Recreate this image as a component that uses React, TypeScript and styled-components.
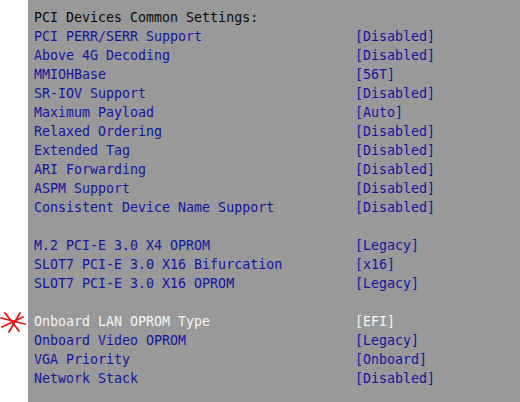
import React from "react";
import styled, { createGlobalStyle } from "styled-components";

const Global = createGlobalStyle`
  html, body { margin: 0; padding: 0; background: #ffffff; }
  #root { width: 520px; height: 402px; }
`;

const Screen = styled.div`
  display: flex;
  width: 520px;
  height: 402px;
  overflow: hidden;
`;

const Gutter = styled.div`
  position: relative;
  width: 28px;
  flex: none;
  background: #ffffff;
`;

const Panel = styled.div`
  flex: 1;
  background: #999999;
  padding: 8px 0 0 6px;
  font-family: "DejaVu Sans Mono", "Liberation Mono", monospace;
  font-size: 13.3px;
  line-height: 19px;
  white-space: pre;
`;

const Row = styled.div<{ $tone: "head" | "item" | "active" }>`
  display: grid;
  grid-template-columns: 321px 1fr;
  height: 19px;
  color: ${(p) => (p.$tone === "head" ? "#0a0a0a" : p.$tone === "active" ? "#f4f4f4" : "#1515a0")};
`;

const Spacer = styled.div`
  height: 19px;
`;

const Mark = styled.svg`
  position: absolute;
  left: 0;
  top: 311px;
`;

type Item = { label: string; value?: string; tone?: "head" | "item" | "active" } | null;

const items: Item[] = [
  { label: "PCI Devices Common Settings:", tone: "head" },
  { label: "PCI PERR/SERR Support", value: "[Disabled]" },
  { label: "Above 4G Decoding", value: "[Disabled]" },
  { label: "MMIOHBase", value: "[56T]" },
  { label: "SR-IOV Support", value: "[Disabled]" },
  { label: "Maximum Payload", value: "[Auto]" },
  { label: "Relaxed Ordering", value: "[Disabled]" },
  { label: "Extended Tag", value: "[Disabled]" },
  { label: "ARI Forwarding", value: "[Disabled]" },
  { label: "ASPM Support", value: "[Disabled]" },
  { label: "Consistent Device Name Support", value: "[Disabled]" },
  null,
  { label: "M.2 PCI-E 3.0 X4 OPROM", value: "[Legacy]" },
  { label: "SLOT7 PCI-E 3.0 X16 Bifurcation", value: "[x16]" },
  { label: "SLOT7 PCI-E 3.0 X16 OPROM", value: "[Legacy]" },
  null,
  { label: "Onboard LAN OPROM Type", value: "[EFI]", tone: "active" },
  { label: "Onboard Video OPROM", value: "[Legacy]" },
  { label: "VGA Priority", value: "[Onboard]" },
  { label: "Network Stack", value: "[Disabled]" },
];

export default function App() {
  return (
    <>
      <Global />
      <Screen>
        <Gutter>
          <Mark width="28" height="24" viewBox="0 0 28 24">
            <g stroke="#ee1111" strokeWidth="1.8" strokeLinecap="round" fill="none">
              <path d="M1 7 L25 13" />
              <path d="M5 2 L19 20" />
              <path d="M20 2 L9 21" />
              <path d="M2 16 L23 6" />
            </g>
          </Mark>
        </Gutter>
        <Panel>
          {items.map((it, i) =>
            it === null ? (
              <Spacer key={i} />
            ) : (
              <Row key={i} $tone={it.tone ?? "item"}>
                <span>{it.label}</span>
                <span>{it.value ?? ""}</span>
              </Row>
            )
          )}
        </Panel>
      </Screen>
    </>
  );
}
